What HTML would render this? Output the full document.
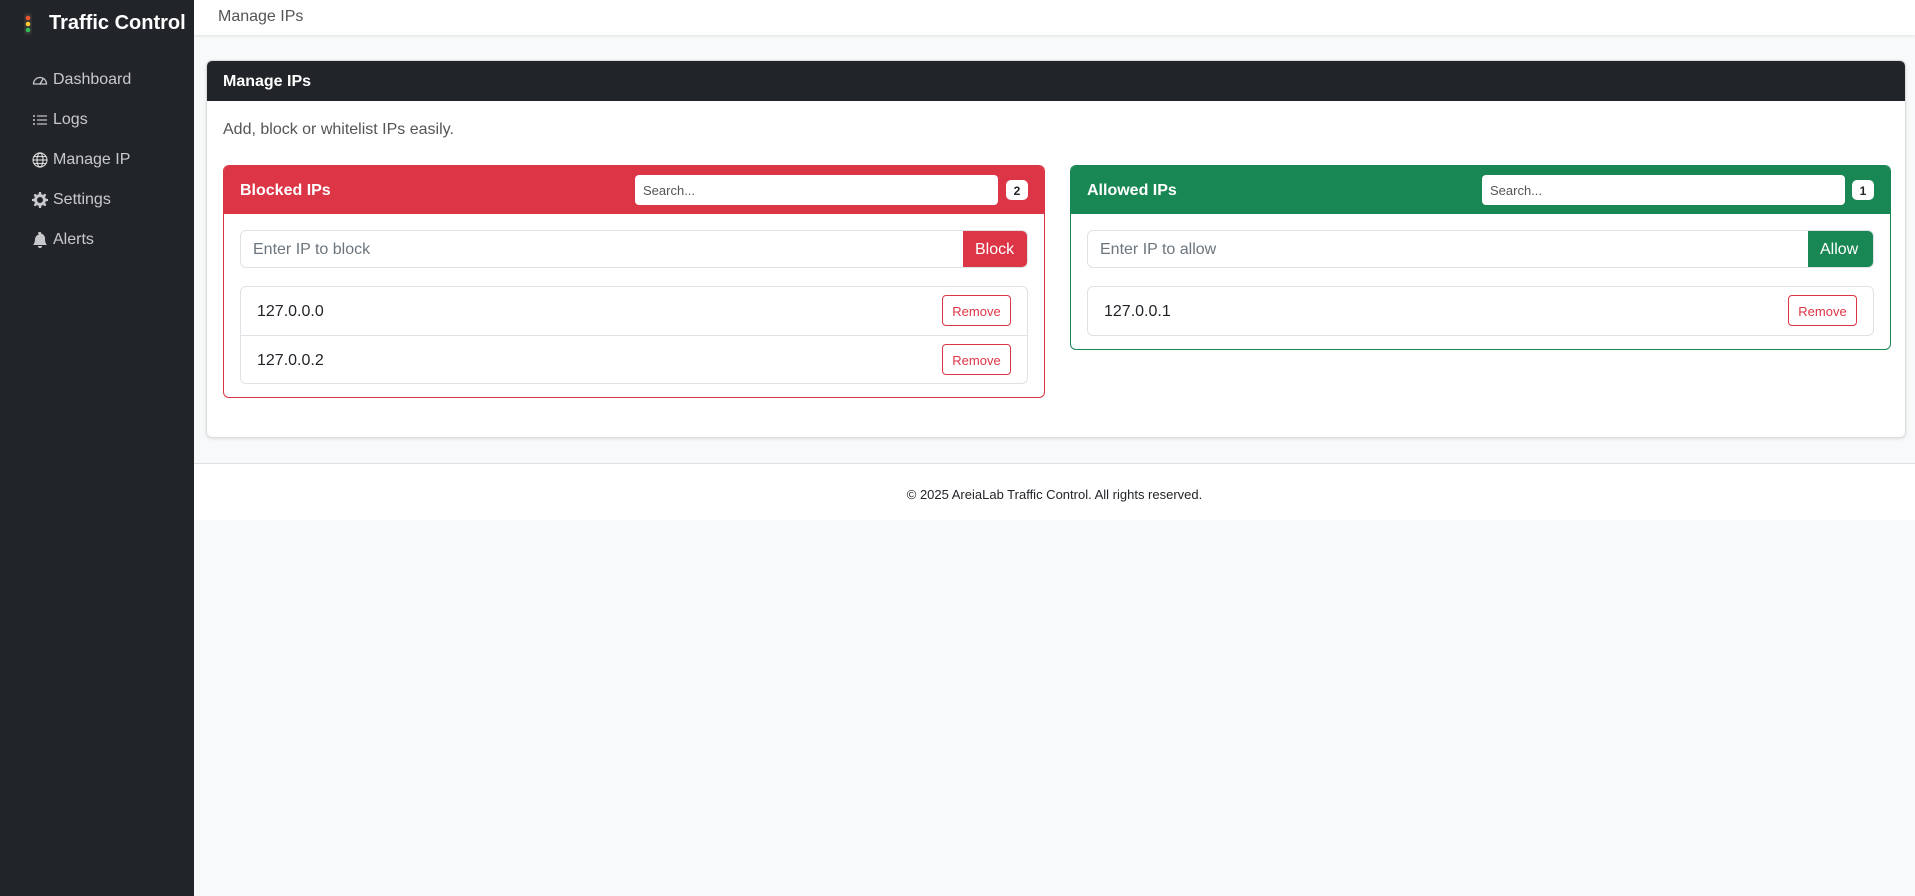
<!DOCTYPE html>
<html><head><meta charset="utf-8"><style>
*{box-sizing:border-box;margin:0;padding:0}
body{width:1915px;height:896px;background:#f8f9fa;font-family:"Liberation Sans",sans-serif;font-size:16px;color:#212529;position:relative;overflow:hidden}
.side{position:absolute;left:0;top:0;width:194px;height:896px;background:#212529;color:#fff}
.brand{position:absolute;left:24px;top:12px;font-size:20px;font-weight:bold;display:flex;align-items:center;gap:17px}
.nav{position:absolute;left:32px;color:rgba(255,255,255,.75);font-size:16px;display:flex;align-items:center;gap:5px}
.nav svg{width:16px;height:16px}
.top{position:absolute;left:194px;top:0;right:0;height:35px;background:#fff;box-shadow:0 1px 3px rgba(0,0,0,.1)}
.top span{position:absolute;left:24px;top:8px;color:#555;font-size:16px}
.card{position:absolute;left:206px;top:60px;width:1700px;height:378px;background:#fff;border:1px solid #ddd;border-radius:6px;box-shadow:0 1px 3px rgba(0,0,0,.1);overflow:hidden}
.ch{height:40px;background:#212529;color:#fff;font-weight:bold;font-size:16px;padding:12px 16px}
.sub{position:absolute;left:16px;top:60px;color:#555}
.pc{position:absolute;top:104px;border-radius:6px;border:1px solid}
.ph{height:48px;color:#fff;font-weight:bold;padding:16px 16px;position:relative;border-radius:5px 5px 0 0}
.srch{position:absolute;top:9px;height:30px;background:#fff;border-radius:4px;font-size:13px;font-weight:normal;color:#555;padding:8px 8px}
.badge{position:absolute;top:14px;width:22px;height:20px;background:#fff;color:#212529;border-radius:5px;font-size:12px;text-align:center;padding-top:4px}
.inp{position:absolute;left:16px;top:64px;height:38px;border:1px solid #dee2e6;border-radius:6px;color:#6c757d;padding:10px 12px;overflow:hidden}
.btn{position:absolute;right:0;top:-1px;bottom:-1px;color:#fff;padding:11px 12px}
.list{position:absolute;left:16px;top:120px;border:1px solid #dee2e6;border-radius:6px}
.row{height:48px;position:relative;padding:16px 16px;font-size:16px}
.row+.row{border-top:1px solid #dee2e6}
.rm{position:absolute;right:16px;top:8px;width:69px;height:31px;border:1px solid #dc3545;border-radius:4px;color:#dc3545;font-size:13px;text-align:center;padding-top:8px}
.foot{position:absolute;left:194px;right:0;top:463px;height:57px;background:#fff;border-top:1px solid #dee2e6;text-align:center;font-size:13px;padding-top:23px}
</style></head><body>
<div class="side">
<div class="brand"><svg width="8" height="22" viewBox="0 0 8 22"><rect width="8" height="22" rx="3" fill="#333"/><circle cx="4" cy="5" r="2.3" fill="#e53"/><circle cx="4" cy="11" r="2.3" fill="#fc3"/><circle cx="4" cy="17" r="2.3" fill="#3b5"/></svg>Traffic Control</div>
<div class="nav" style="top:71px"><svg viewBox="0 0 16 16" fill="none" stroke="currentColor" stroke-width="1.3"><path d="M1.5 12a6.5 6.5 0 1 1 13 0z"/><path d="M8 12l3-5"/></svg>Dashboard</div>
<div class="nav" style="top:111px"><svg viewBox="0 0 16 16" fill="currentColor"><circle cx="2" cy="4" r="1"/><circle cx="2" cy="8" r="1"/><circle cx="2" cy="12" r="1"/><rect x="5" y="3.4" width="10" height="1.2"/><rect x="5" y="7.4" width="10" height="1.2"/><rect x="5" y="11.4" width="10" height="1.2"/></svg>Logs</div>
<div class="nav" style="top:151px"><svg viewBox="0 0 16 16" fill="none" stroke="currentColor" stroke-width="1.2"><circle cx="8" cy="8" r="7"/><ellipse cx="8" cy="8" rx="3" ry="7"/><path d="M1 8h14M2 4.5h12M2 11.5h12"/></svg>Manage IP</div>
<div class="nav" style="top:191px"><svg viewBox="0 0 16 16" fill="currentColor"><path d="M7 0h2l.4 2.2 1.6.7 1.9-1.3 1.4 1.4-1.3 1.9.7 1.6L16 7v2l-2.2.4-.7 1.6 1.3 1.9-1.4 1.4-1.9-1.3-1.6.7L9 16H7l-.4-2.2-1.6-.7-1.9 1.3-1.4-1.4 1.3-1.9-.7-1.6L0 9V7l2.2-.4.7-1.6-1.3-1.9 1.4-1.4 1.9 1.3 1.6-.7zM8 5a3 3 0 1 0 0 6 3 3 0 0 0 0-6z"/></svg>Settings</div>
<div class="nav" style="top:231px"><svg viewBox="0 0 16 16" fill="currentColor"><path d="M8 0a1 1 0 0 1 1 1.5A5 5 0 0 1 13 7c0 3 1 5 2 6H1c1-1 2-3 2-6a5 5 0 0 1 4-4.5A1 1 0 0 1 8 0zM6 14h4a2 2 0 0 1-4 0z"/></svg>Alerts</div>
</div>
<div class="top"><span>Manage IPs</span></div>
<div class="card">
<div class="ch">Manage IPs</div>
<div class="sub">Add, block or whitelist IPs easily.</div>
<div class="pc" style="left:16px;width:822px;height:233px;border-color:#dc3545">
<div class="ph" style="background:#dc3545">Blocked IPs<div class="srch" style="left:411px;width:363px">Search...</div><div class="badge" style="left:782px">2</div></div>
<div class="inp" style="width:788px">Enter IP to block<div class="btn" style="background:#dc3545;width:64px">Block</div></div>
<div class="list" style="width:788px"><div class="row">127.0.0.0<div class="rm">Remove</div></div><div class="row">127.0.0.2<div class="rm">Remove</div></div></div>
</div>
<div class="pc" style="left:863px;width:821px;height:185px;border-color:#198754">
<div class="ph" style="background:#198754">Allowed IPs<div class="srch" style="left:411px;width:363px">Search...</div><div class="badge" style="left:781px">1</div></div>
<div class="inp" style="width:787px">Enter IP to allow<div class="btn" style="background:#198754;width:65px">Allow</div></div>
<div class="list" style="width:787px"><div class="row">127.0.0.1<div class="rm">Remove</div></div></div>
</div>
</div>
<div class="foot">© 2025 AreiaLab Traffic Control. All rights reserved.</div>
</body></html>
